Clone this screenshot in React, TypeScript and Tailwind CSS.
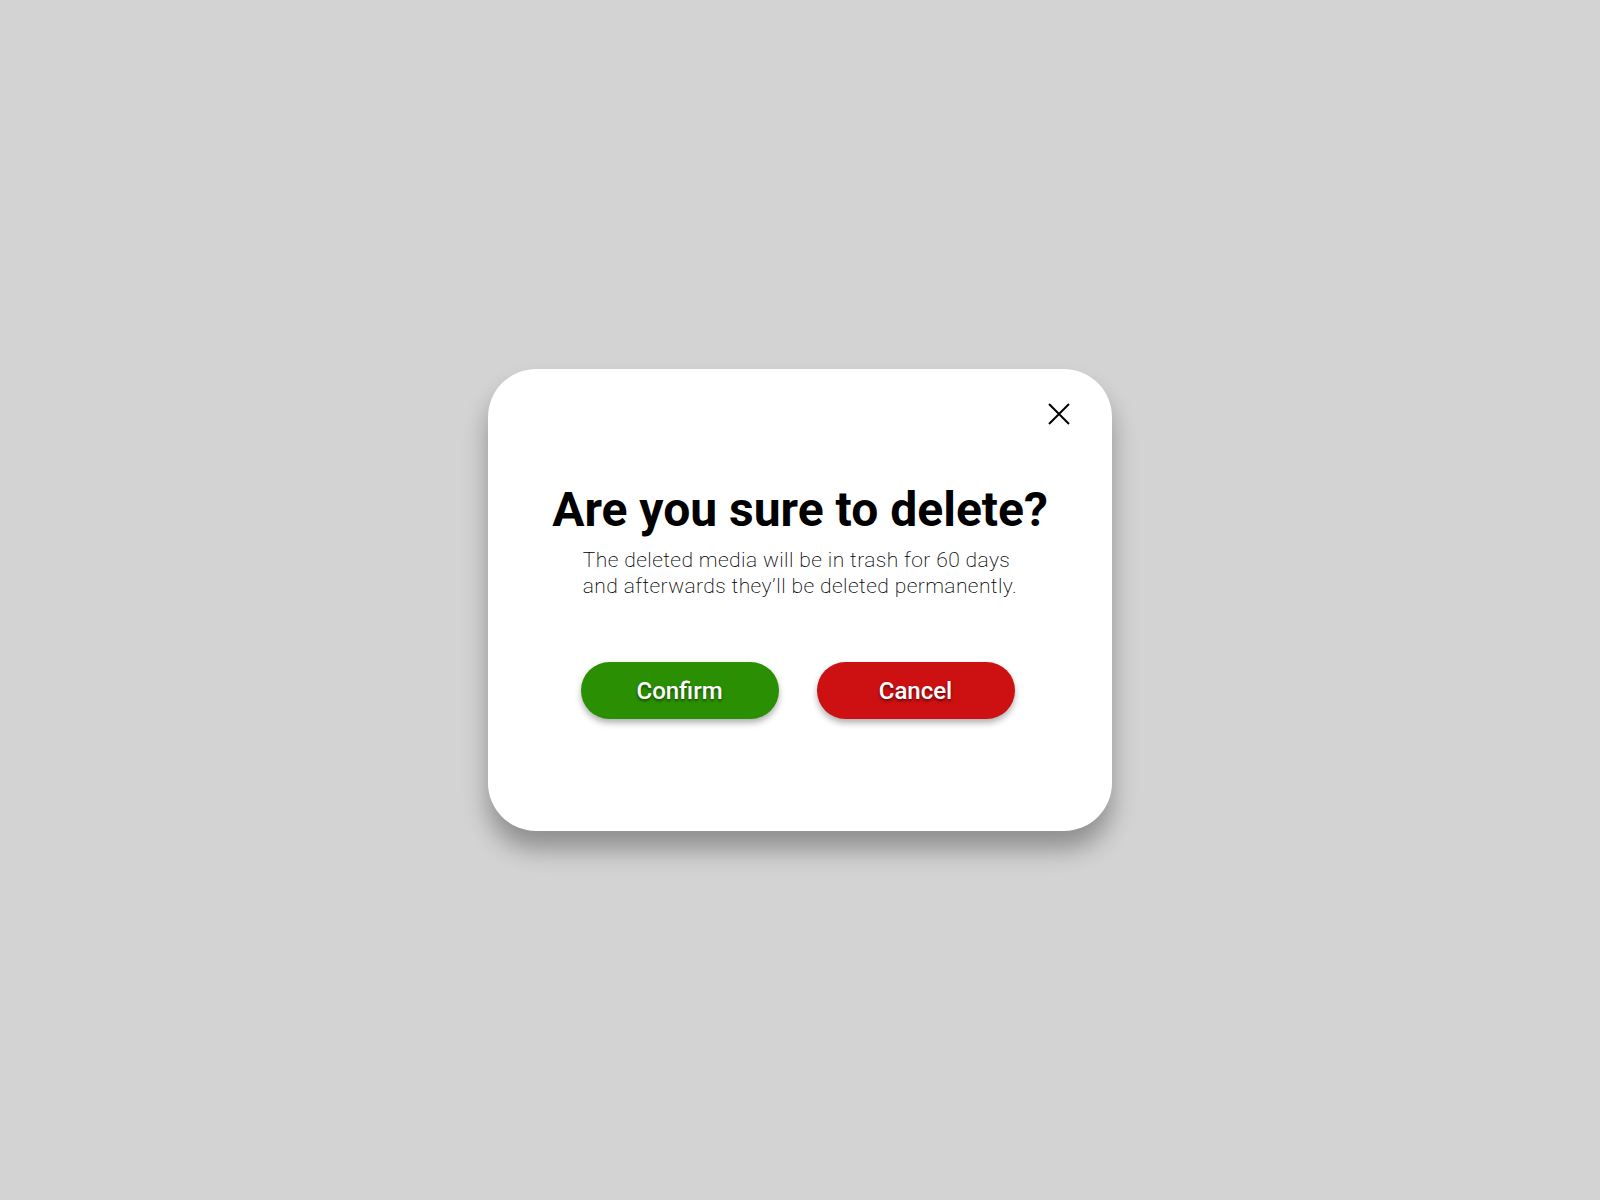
// Delete confirmation dialog centred on a flat grey page.
export default function App() {
  return (
    <div className="flex min-h-screen w-full items-center justify-center bg-[#d3d3d3] font-['Roboto',sans-serif]">
      <div className="relative flex h-[462px] w-[624px] flex-col items-center rounded-[48px] bg-white pt-[113px] shadow-[0_18px_24px_rgba(0,0,0,0.32)]">
        <button
          type="button"
          aria-label="Close"
          className="absolute right-[42px] top-[34px] flex size-[22px] items-center justify-center text-black"
        >
          <svg viewBox="0 0 22 22" className="size-[22px]" fill="none" stroke="currentColor" strokeWidth={2}>
            <path d="M1 1L21 21M21 1L1 21" />
          </svg>
        </button>

        <h2 className="text-[48px] font-bold leading-[56px] text-black">
          Are you sure to delete?
        </h2>
        <p className="mt-[9px] text-left text-[21px] font-extralight leading-[26px] tracking-[0.4px] text-black">
          The deleted media will be in trash for 60 days
          <br />
          and afterwards they’ll be deleted permanently.
        </p>

        <div className="mr-[5px] mt-[63px] flex gap-[38px]">
          <button
            type="button"
            className="h-[57px] w-[198px] rounded-full bg-[#2a8f03] text-[24px] font-medium text-white shadow-[0_4px_6px_rgba(0,0,0,0.3)] [text-shadow:0_2px_3px_rgba(0,0,0,0.5)]"
          >
            Confirm
          </button>
          <button
            type="button"
            className="h-[57px] w-[198px] rounded-full bg-[#cd1012] text-[24px] font-medium text-white shadow-[0_4px_6px_rgba(0,0,0,0.3)] [text-shadow:0_2px_3px_rgba(0,0,0,0.5)]"
          >
            Cancel
          </button>
        </div>
      </div>
    </div>
  );
}
